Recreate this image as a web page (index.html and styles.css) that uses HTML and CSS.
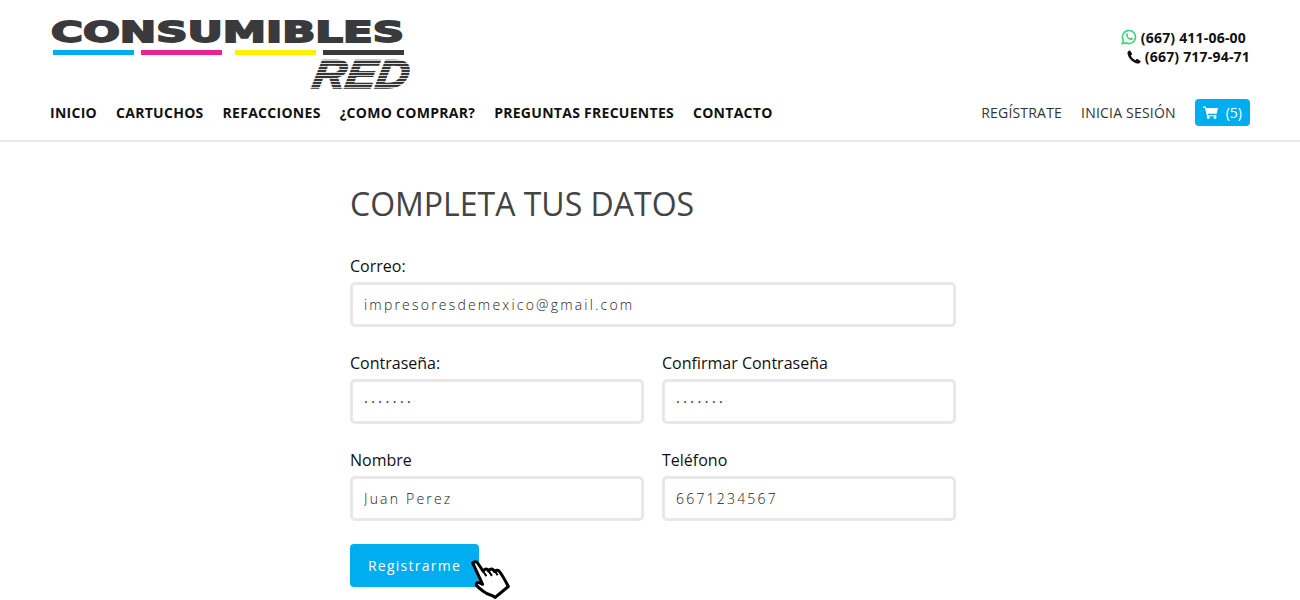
FILE: index.html
```html
<!DOCTYPE html>
<html lang="es">
<head>
<meta charset="UTF-8" />
<title>Completa tus datos</title>
<link rel="stylesheet" href="styles.css">
</head>
<body>

<header class="site-header">
  <div class="header-top">
    <a href="#" class="logo" aria-label="Consumibles Red">
      <svg width="362" height="86" viewBox="0 0 362 86">
        <defs>
          <pattern id="red-lines" width="4" height="3" patternUnits="userSpaceOnUse">
            <rect width="4" height="2.200" fill="#333335"/>
          </pattern>
        </defs>
        <text x="1" y="29" class="logo-name" textLength="353" lengthAdjust="spacingAndGlyphs">CONSUMIBLES</text>
        <rect x="3" y="37" width="81" height="5" fill="#00aeef"/>
        <rect x="91" y="37" width="81" height="5" fill="#ed2290"/>
        <rect x="185" y="37" width="81" height="5" fill="#fff200"/>
        <rect x="273" y="37" width="81" height="5" fill="#3a3a3c"/>
        <g transform="translate(261 75) skewX(-10)">
          <text x="0" y="0" class="logo-red" textLength="96" lengthAdjust="spacingAndGlyphs" fill="url(#red-lines)" stroke="url(#red-lines)">RED</text>
        </g>
      </svg>
    </a>
    <div class="phones">
      <div class="phone phone-1">
        <svg class="wa-icon" width="16" height="16" viewBox="0 0 16 16"><path fill="none" stroke="#3fd476" stroke-width="1.6" d="M1.300 14.700l1-3.500A6.500 6.500 0 1 1 4.800 13.700z"/><path fill="#3fd476" d="M5.700 4.500c.4-.4.800-.3 1 .1l.5 1.100c.1.300 0 .5-.4 1-.1.200-.1.300 0 .5.500.9 1.200 1.500 2.100 1.900.2.100.3.100.5-.1.500-.6.600-.7 1-.5l1.100.5c.4.200.4.400.3.900-.2.900-1.200 1.300-2 1.100-2.400-.6-4.100-2.300-4.700-4.300-.2-.8 0-1.500.6-2.200z"/></svg>
        (667) 411-06-00
      </div>
      <div class="phone">
        <svg width="14" height="14" viewBox="0 0 14 14"><path fill="#111" d="M3.300.7l1.700 3c.2.400.1.700-.2 1L3.800 5.600c.7 1.900 2.500 3.800 4.600 4.600l.9-1c.3-.3.600-.4 1-.2l3 1.700c.4.200.4.500.3.800-.5 1.500-1.700 2.300-3 2.100C5.800 12.800 1.300 8.300.5 3.500.3 2.200 1.100 1 2.500.5c.3-.1.600-.1.800.2z"/></svg>
        (667) 717-94-71
      </div>
    </div>
  </div>
  <nav class="nav">
    <ul class="nav-main">
      <li><a href="#">INICIO</a></li>
      <li><a href="#">CARTUCHOS</a></li>
      <li><a href="#">REFACCIONES</a></li>
      <li><a href="#">¿COMO COMPRAR?</a></li>
      <li><a href="#">PREGUNTAS FRECUENTES</a></li>
      <li><a href="#">CONTACTO</a></li>
    </ul>
    <div class="nav-user">
      <a href="#">REGÍSTRATE</a>
      <a href="#">INICIA SESIÓN</a>
      <a href="#" class="cart-btn">
        <svg width="15" height="13" viewBox="0 0 15 13"><path fill="#fff" d="M0 .5h2.700l.4 1.500H15l-1.300 5.800H4.700l.3 1.200h8.300v1.200H4L1.900 1.700H0z"/><circle cx="5.300" cy="11.500" r="1.400" fill="#fff"/><circle cx="12" cy="11.500" r="1.400" fill="#fff"/></svg>
        (5)
      </a>
    </div>
  </nav>
</header>

<main class="register">
  <h1>COMPLETA TUS DATOS</h1>
  <form class="form-grid">
    <div class="field field-wide">
      <label for="correo">Correo:</label>
      <input id="correo" type="text" value="impresoresdemexico@gmail.com">
    </div>
    <div class="field">
      <label for="pass">Contraseña:</label>
      <input id="pass" class="dots" type="text" value="·······">
    </div>
    <div class="field">
      <label for="pass2">Confirmar Contraseña</label>
      <input id="pass2" class="dots" type="text" value="·······">
    </div>
    <div class="field">
      <label for="nombre">Nombre</label>
      <input id="nombre" type="text" value="Juan Perez">
    </div>
    <div class="field">
      <label for="tel">Teléfono</label>
      <input id="tel" type="text" value="6671234567">
    </div>
    <div class="submit-row">
      <button type="button" class="submit-btn">Registrarme</button>
      <svg class="hand" width="46" height="44" viewBox="0 0 42 40"><path fill="#fff" stroke="#000" stroke-width="2.800" stroke-linejoin="round" d="M2.500 4.500c1.500-1.800 3.500-1.500 4.500 0l5 7.500c.5-1.700 2.500-2.500 4-1.500l1 1.200c.7-1.700 2.800-2.200 4.200-1l1.200 1.500c1-1.400 3-1.500 4.200-.3 2.500 3 5 7.500 8.400 14l-12 10-2.500-1.500c-3.500-1-6.500-2.500-9-4.500-2-1.500-4-3-5.500-4.800-.8-1.700.7-3.300 2.500-2.700l3 1.500z"/><path fill="none" stroke="#000" stroke-width="1.800" d="M12 12l3 4.500M17 11.700l3 4.500M22.400 11.200l2.800 4.500"/></svg>
    </div>
  </form>
</main>

</body>
</html>
```

FILE: styles.css
```css
* {
  box-sizing: border-box;
}
html, body {
  height: 600px;
  overflow: hidden;
}
body {
  margin: 0;
  font-family: 'Open Sans', sans-serif;
  background-color: #fff;
  color: #111;
}
a {
  color: inherit;
  text-decoration: none;
}
.site-header {
  height: 142px;
  padding: 13px 50px 0;
  border-bottom: 2px solid #e9e9e9;
}
.header-top {
  display: flex;
  justify-content: space-between;
  height: 81px;
}
.logo {
  display: block;
  height: 81px;
}
.logo-name {
  font-family: 'DejaVu Sans', sans-serif;
  font-weight: bold;
  font-size: 29px;
  fill: #3a3a3c;
  stroke: #3a3a3c;
  stroke-width: 1.8px;
}
.logo-red {
  font-family: 'Liberation Sans', sans-serif;
  font-weight: bold;
  font-style: italic;
  font-size: 40px;
  stroke-width: 1.6px;
}
.phones {
  padding-top: 15px;
  text-align: right;
  font-size: 14px;
  font-weight: 700;
  letter-spacing: 0.2px;
  line-height: 19px;
}
.phone {
  display: flex;
  justify-content: flex-end;
  align-items: center;
  gap: 4px;
}
.phone-1 {
  padding-right: 4px;
}
.wa-icon {
  margin-top: -2px;
}
.nav {
  display: flex;
  justify-content: space-between;
  align-items: center;
  height: 36px;
}
.nav-main {
  display: flex;
  gap: 19px;
  margin: 0;
  padding: 0;
  list-style: none;
  font-size: 14px;
  font-weight: 700;
  letter-spacing: 0.28px;
}
.nav-user {
  display: flex;
  align-items: center;
  gap: 19px;
  font-size: 14px;
  letter-spacing: 0.2px;
  color: #333;
}
.cart-btn {
  display: flex;
  align-items: center;
  gap: 8px;
  height: 27px;
  padding: 0 8px;
  border-radius: 4px;
  background-color: #00aeef;
  color: #fff;
  letter-spacing: 0;
}
.register {
  width: 606px;
  margin-left: 350px;
  padding-top: 42px;
}
h1 {
  margin: 0 0 30px;
  font-size: 32px;
  font-weight: 400;
  line-height: 40px;
  color: #444;
}
.form-grid {
  display: grid;
  grid-template-columns: 1fr 1fr;
  column-gap: 18px;
  row-gap: 24px;
}
.field-wide {
  grid-column: 1 / -1;
}
.field label {
  display: block;
  margin-bottom: 4px;
  font-size: 16px;
  line-height: 24px;
  color: #111;
}
.field input {
  display: block;
  width: 100%;
  height: 45px;
  padding: 0 11px;
  border: 3px solid #e8e8e8;
  border-radius: 5px;
  font-family: 'Open Sans', sans-serif;
  font-size: 14px;
  font-weight: 300;
  letter-spacing: 2.2px;
  color: #222;
  outline: none;
}
.field input.dots {
  font-weight: 400;
  letter-spacing: 3.5px;
}
.submit-row {
  position: relative;
  grid-column: 1 / -1;
  margin-top: -1px;
}
.submit-btn {
  display: block;
  width: 129px;
  height: 43px;
  border: none;
  border-radius: 4px;
  background-color: #00aeef;
  color: #fff;
  font-family: 'Open Sans', sans-serif;
  font-size: 14px;
  font-weight: 500;
  letter-spacing: 1.25px;
}
.hand {
  position: absolute;
  left: 120px;
  top: 14px;
}
```
